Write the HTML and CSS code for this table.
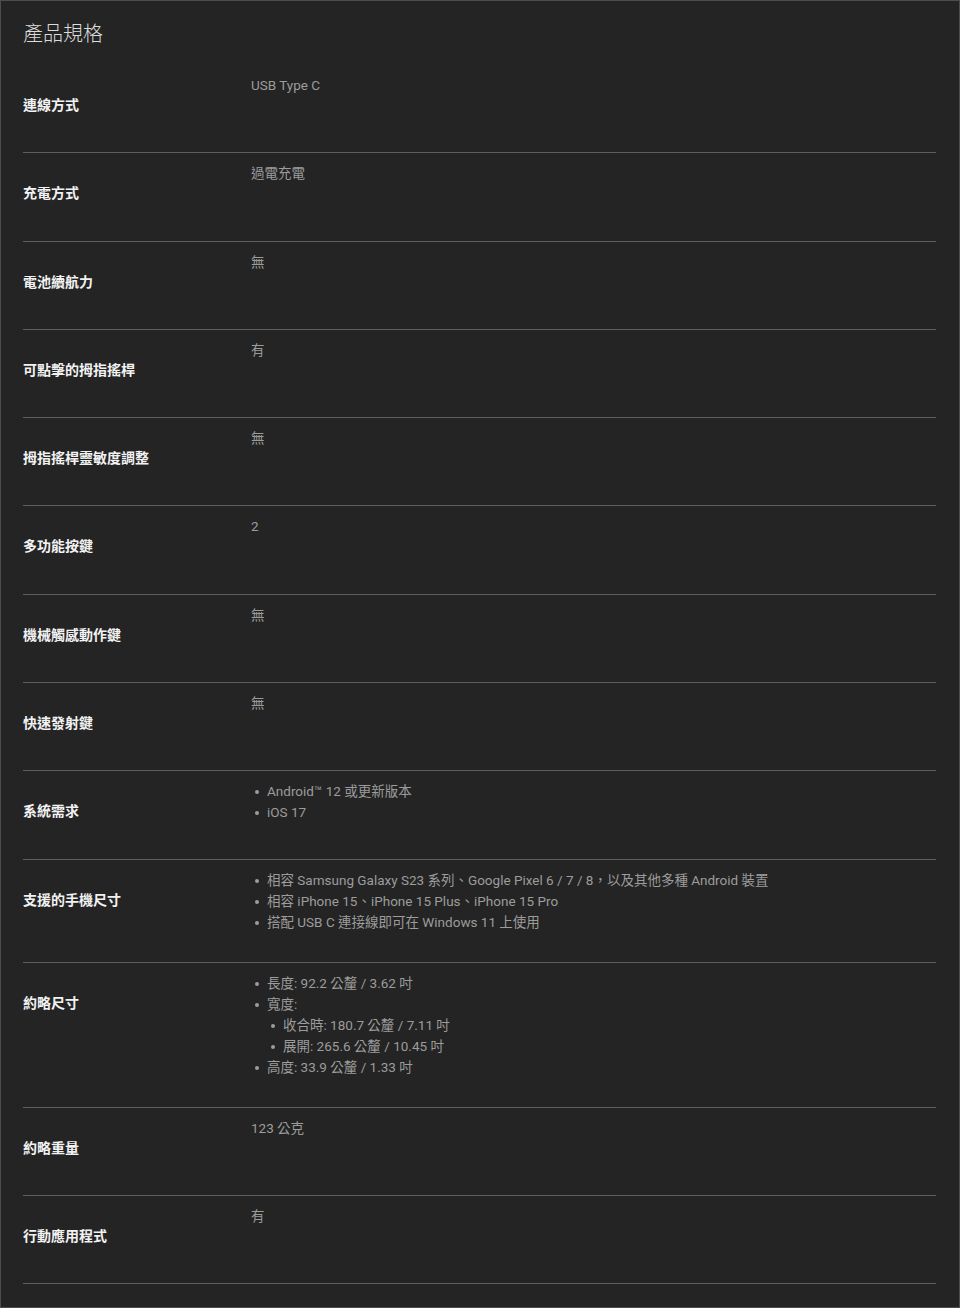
FILE: index.html
```html
<!DOCTYPE html>
<html>
    <head>
        <meta charset="utf-8">
        <meta name="viewport" content="width=device-width,initial-scale=1.0">
        <title>產品規格</title>
        <link rel="stylesheet" href="styles.css">
    </head>
    <body>
        <div class="specs">
            <h2 class="specsTitle">產品規格</h2>

            <div class="specRow">
                <div class="specLabel">連線方式</div>
                <div class="specValue">USB Type C</div>
            </div>
            <div class="specRow">
                <div class="specLabel">充電方式</div>
                <div class="specValue">過電充電</div>
            </div>
            <div class="specRow">
                <div class="specLabel">電池續航力</div>
                <div class="specValue">無</div>
            </div>
            <div class="specRow">
                <div class="specLabel">可點擊的拇指搖桿</div>
                <div class="specValue">有</div>
            </div>
            <div class="specRow">
                <div class="specLabel">拇指搖桿靈敏度調整</div>
                <div class="specValue">無</div>
            </div>
            <div class="specRow">
                <div class="specLabel">多功能按鍵</div>
                <div class="specValue">2</div>
            </div>
            <div class="specRow">
                <div class="specLabel">機械觸感動作鍵</div>
                <div class="specValue">無</div>
            </div>
            <div class="specRow">
                <div class="specLabel">快速發射鍵</div>
                <div class="specValue">無</div>
            </div>
            <div class="specRow">
                <div class="specLabel">系統需求</div>
                <div class="specValue">
                    <ul class="bullets">
                        <li>Android™ 12 或更新版本</li>
                        <li>iOS 17</li>
                    </ul>
                </div>
            </div>
            <div class="specRow">
                <div class="specLabel">支援的手機尺寸</div>
                <div class="specValue">
                    <ul class="bullets">
                        <li>相容 Samsung Galaxy S23 系列、Google Pixel 6 / 7 / 8，以及其他多種 Android 裝置</li>
                        <li>相容 iPhone 15、iPhone 15 Plus、iPhone 15 Pro</li>
                        <li>搭配 USB C 連接線即可在 Windows 11 上使用</li>
                    </ul>
                </div>
            </div>
            <div class="specRow">
                <div class="specLabel">約略尺寸</div>
                <div class="specValue">
                    <ul class="bullets">
                        <li>長度: 92.2 公釐 / 3.62 吋</li>
                        <li>寬度:
                            <ul class="bullets">
                                <li>收合時: 180.7 公釐 / 7.11 吋</li>
                                <li>展開: 265.6 公釐 / 10.45 吋</li>
                            </ul>
                        </li>
                        <li>高度: 33.9 公釐 / 1.33 吋</li>
                    </ul>
                </div>
            </div>
            <div class="specRow">
                <div class="specLabel">約略重量</div>
                <div class="specValue">123 公克</div>
            </div>
            <div class="specRow">
                <div class="specLabel">行動應用程式</div>
                <div class="specValue">有</div>
            </div>
        </div>
    </body>
</html>
```

FILE: styles.css
```css
html, body {
    margin: 0;
    padding: 0;
    background-color: #242424;
}

body {
    height: 1308px;
    box-sizing: border-box;
    border: 1px solid #4d4d4d;
    font-family: Roboto, "Noto Sans CJK TC", sans-serif;
}

.specs {
    padding: 0 23px 0 22px;
}

.specsTitle {
    margin: 0;
    padding-top: 19px;
    height: 64px;
    box-sizing: border-box;
    color: #dcdcdc;
    font-family: "Noto Sans CJK TC", sans-serif;
    font-size: 20px;
    font-weight: 300;
    line-height: 26px;
}

.specRow {
    display: grid;
    grid-template-columns: 228px 1fr;
    border-bottom: 1px solid #5e5e5e;
}

.specLabel {
    padding: 30px 0 39px;
    color: #f2f2f2;
    font-family: "Noto Sans CJK TC", sans-serif;
    font-size: 14px;
    font-weight: 700;
    line-height: 18.3px;
}

.specValue {
    padding: 10px 0 29px;
    color: #9c9c9c;
    font-size: 13.5px;
    line-height: 21px;
}

.bullets {
    margin: 0;
    padding: 0;
    list-style: none;
}

.bullets li {
    position: relative;
    padding-left: 16px;
}

.bullets li::before {
    content: "";
    position: absolute;
    left: 4px;
    top: 9px;
    width: 4px;
    height: 4px;
    border-radius: 50%;
    background-color: #9c9c9c;
}
```
